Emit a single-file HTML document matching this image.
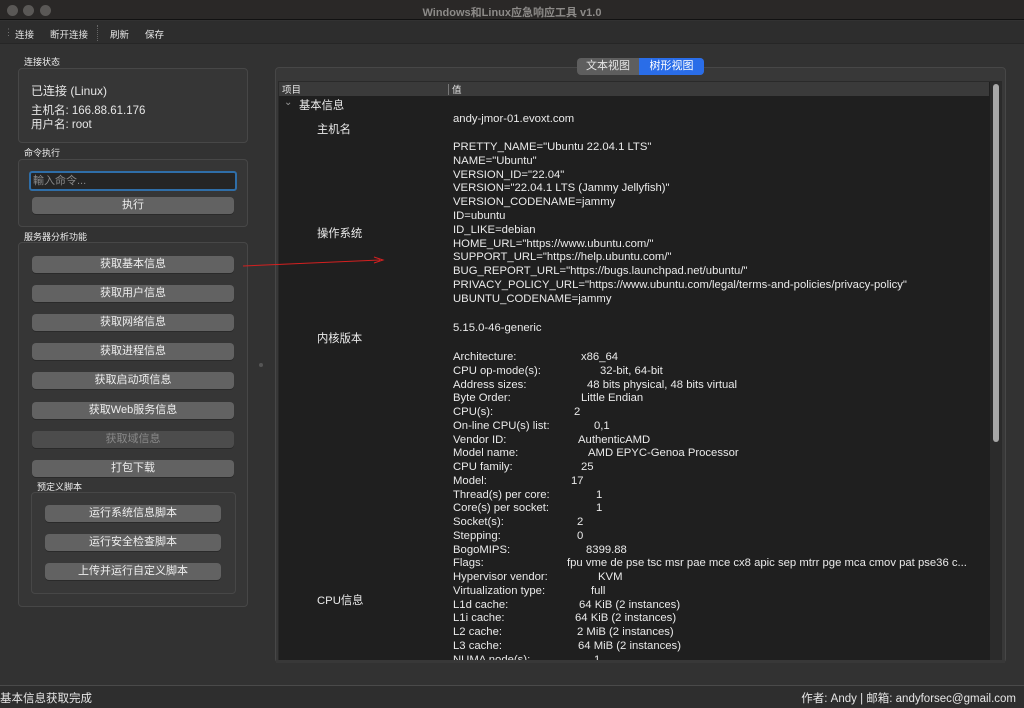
<!DOCTYPE html>
<html><head><meta charset="utf-8"><style>
*{margin:0;padding:0;box-sizing:border-box}
body{width:1024px;height:708px;background:#323232;font-family:"Liberation Sans","Noto Sans CJK SC",sans-serif;color:#e6e6e6;position:relative;overflow:hidden;font-size:11px}
.a{position:absolute;white-space:nowrap}
.title{left:0;top:0;width:1024px;height:20px;background:#2a2827;border-bottom:1px solid #111}
.dot{position:absolute;top:5px;width:11px;height:11px;border-radius:50%;background:#5a5856}
.tb{left:0;top:21px;width:1024px;height:23px;background:#2d2d2d;border-bottom:1px solid #262626}
.box{position:absolute;border:1px solid #474747;border-radius:4px;background:#363636}
.btn{position:absolute;height:17px;border-radius:4px;background:#626262;color:#eee;text-align:center;line-height:17px;font-size:11px;box-shadow:0 1px 0 #2a2a2a}
.lbl{font-size:9px;color:#eee}
.v{position:absolute;left:453px;font-size:11.3px;color:#eaeaea;white-space:nowrap}
.k{position:absolute;font-size:11.3px;color:#eaeaea;white-space:nowrap}
</style></head><body>
<div class="a title"><div class="dot" style="left:7px"></div><div class="dot" style="left:23px"></div><div class="dot" style="left:40px"></div>
<div class="a" style="left:0;width:1024px;text-align:center;top:4px;color:#8c8a88;font-size:11px;font-weight:bold">Windows和Linux应急响应工具 v1.0</div></div>
<div class="a tb">
<div class="a" style="left:4px;top:6px;color:#777;font-size:9px">⋮</div>
<div class="a" style="left:15px;top:6px;font-size:9.5px">连接</div>
<div class="a" style="left:50px;top:6px;font-size:9.5px">断开连接</div>
<div class="a" style="left:97px;top:4px;height:16px;border-left:1px dotted #666"></div>
<div class="a" style="left:110px;top:6px;font-size:9.5px">刷新</div>
<div class="a" style="left:145px;top:6px;font-size:9.5px">保存</div>
</div>

<div class="a lbl" style="left:24px;top:55px">连接状态</div>
<div class="box" style="left:18px;top:68px;width:230px;height:75px"></div>
<div class="a" style="left:31px;top:82px;font-size:12px">已连接 (Linux)</div>
<div class="a" style="left:31px;top:102px;font-size:11.5px">主机名: 166.88.61.176</div>
<div class="a" style="left:31px;top:116px;font-size:11.5px">用户名: root</div>

<div class="a lbl" style="left:24px;top:146px">命令执行</div>
<div class="box" style="left:18px;top:159px;width:230px;height:68px"></div>
<div class="a" style="left:29px;top:171px;width:208px;height:20px;background:#252525;border:2px solid #2f6ea8;border-radius:3px;color:#888;font-size:11px;padding:2px 2px;line-height:13px">輸入命令...</div>
<div class="btn" style="left:32px;top:197px;width:202px;font-size:11px">执行</div>

<div class="a lbl" style="left:24px;top:230px">服务器分析功能</div>
<div class="box" style="left:18px;top:242px;width:230px;height:365px"></div>
<div class="btn" style="left:32px;top:256px;width:202px">获取基本信息</div>
<div class="btn" style="left:32px;top:285px;width:202px">获取用户信息</div>
<div class="btn" style="left:32px;top:314px;width:202px">获取网络信息</div>
<div class="btn" style="left:32px;top:343px;width:202px">获取进程信息</div>
<div class="btn" style="left:32px;top:372px;width:202px">获取启动项信息</div>
<div class="btn" style="left:32px;top:402px;width:202px">获取Web服务信息</div>
<div class="btn" style="left:32px;top:431px;width:202px;background:#4c4c4c;color:#888">获取域信息</div>
<div class="btn" style="left:32px;top:460px;width:202px">打包下载</div>
<div class="a lbl" style="left:37px;top:480px">预定义脚本</div>
<div class="box" style="left:31px;top:492px;width:205px;height:102px;background:#383838"></div>
<div class="btn" style="left:45px;top:505px;width:176px">运行系统信息脚本</div>
<div class="btn" style="left:45px;top:534px;width:176px">运行安全检查脚本</div>
<div class="btn" style="left:45px;top:563px;width:176px">上传并运行自定义脚本</div>

<div class="a" style="left:259px;top:363px;width:4px;height:4px;border-radius:50%;background:#555"></div>

<div class="box" style="left:275px;top:67px;width:731px;height:596px;background:#383838"></div>
<div class="a" style="left:577px;top:58px;width:127px;height:17px;border-radius:4px;background:#5e5e5e;overflow:hidden">
<div class="a" style="left:0;top:0;width:62px;height:17px;text-align:center;line-height:17px;font-size:11px">文本视图</div>
<div class="a" style="left:62px;top:0;width:65px;height:17px;background:#2a6de8;text-align:center;line-height:17px;font-size:11px;color:#fff">树形视图</div></div>
<div class="a" style="left:278px;top:81px;width:724px;height:580px;background:#1f1f1f;border:1px solid #2a2a2a"></div>
<div class="a" style="left:279px;top:82px;width:710px;height:14px;background:#3a3a3a"></div>
<div class="a" style="left:282px;top:82px;font-size:9.5px">项目</div>
<div class="a" style="left:448px;top:84px;height:11px;border-left:1px solid #777"></div>
<div class="a" style="left:452px;top:82px;font-size:9.5px">值</div>
<div class="a" style="left:990px;top:82px;width:11px;height:578px;background:#2b2b2b"></div>
<div class="a" style="left:993px;top:84px;width:6px;height:358px;border-radius:3px;background:#a8a8a8"></div>

<div class="k" style="left:284px;top:97px;color:#999;font-size:10px">⌄</div>
<div class="k" style="left:299px;top:97px">基本信息</div>
<div class="k" style="left:317px;top:121px">主机名</div>
<div class="k" style="left:317px;top:225px">操作系统</div>
<div class="k" style="left:317px;top:330px">内核版本</div>
<div class="k" style="left:317px;top:592px">CPU信息</div>

<div class="v" style="top:113px">andy-jmor-01.evoxt.com</div>
<div class="v" style="top:141px;line-height:13.8px">PRETTY_NAME="Ubuntu 22.04.1 LTS"<br>NAME="Ubuntu"<br>VERSION_ID="22.04"<br>VERSION="22.04.1 LTS (Jammy Jellyfish)"<br>VERSION_CODENAME=jammy<br>ID=ubuntu<br>ID_LIKE=debian<br>HOME_URL="https://www.ubuntu.com/"<br>SUPPORT_URL="https://help.ubuntu.com/"<br>BUG_REPORT_URL="https://bugs.launchpad.net/ubuntu/"<br>PRIVACY_POLICY_URL="https://www.ubuntu.com/legal/terms-and-policies/privacy-policy"<br>UBUNTU_CODENAME=jammy</div>
<div class="v" style="top:322px">5.15.0-46-generic</div>

<div class="v" style="top:351px;line-height:13.75px">Architecture:<br>CPU op-mode(s):<br>Address sizes:<br>Byte Order:<br>CPU(s):<br>On-line CPU(s) list:<br>Vendor ID:<br>Model name:<br>CPU family:<br>Model:<br>Thread(s) per core:<br>Core(s) per socket:<br>Socket(s):<br>Stepping:<br>BogoMIPS:<br>Flags:<br>Hypervisor vendor:<br>Virtualization type:<br>L1d cache:<br>L1i cache:<br>L2 cache:<br>L3 cache:<br>NUMA node(s):</div>
<div class="k" style="left:581px;top:351px">x86_64</div>
<div class="k" style="left:600px;top:364.75px">32-bit, 64-bit</div>
<div class="k" style="left:587px;top:378.5px">48 bits physical, 48 bits virtual</div>
<div class="k" style="left:581px;top:392.25px">Little Endian</div>
<div class="k" style="left:574px;top:406px">2</div>
<div class="k" style="left:594px;top:419.75px">0,1</div>
<div class="k" style="left:578px;top:433.5px">AuthenticAMD</div>
<div class="k" style="left:588px;top:447.25px">AMD EPYC-Genoa Processor</div>
<div class="k" style="left:581px;top:461px">25</div>
<div class="k" style="left:571px;top:474.75px">17</div>
<div class="k" style="left:596px;top:488.5px">1</div>
<div class="k" style="left:596px;top:502.25px">1</div>
<div class="k" style="left:577px;top:516px">2</div>
<div class="k" style="left:577px;top:529.75px">0</div>
<div class="k" style="left:586px;top:543.5px">8399.88</div>
<div class="k" style="left:567px;top:557.25px">fpu vme de pse tsc msr pae mce cx8 apic sep mtrr pge mca cmov pat pse36 c...</div>
<div class="k" style="left:598px;top:571px">KVM</div>
<div class="k" style="left:591px;top:584.75px">full</div>
<div class="k" style="left:579px;top:598.5px">64 KiB (2 instances)</div>
<div class="k" style="left:575px;top:612.25px">64 KiB (2 instances)</div>
<div class="k" style="left:577px;top:626px">2 MiB (2 instances)</div>
<div class="k" style="left:578px;top:639.75px">64 MiB (2 instances)</div>
<div class="k" style="left:594px;top:653.5px">1</div>
<div class="a" style="left:276px;top:660px;width:729px;height:3px;background:#383838"></div>
<div class="a" style="left:276px;top:663px;width:729px;height:22px;background:#323232"></div>

<svg class="a" style="left:240px;top:255px" width="150" height="16"><line x1="3" y1="11" x2="140" y2="5" stroke="#d42020" stroke-width="1"/><path d="M134 2 L143 5 L134 8" fill="none" stroke="#d42020" stroke-width="1"/></svg>

<div class="a" style="left:0;top:685px;width:1024px;height:23px;border-top:1px solid #4a4a4a;background:#2e2e2e"></div>
<div class="a" style="left:0;top:690px;font-size:11.5px">基本信息获取完成</div>
<div class="a" style="right:8px;top:690px;font-size:11.5px">作者: Andy | 邮箱: andyforsec@gmail.com</div>
</body></html>
